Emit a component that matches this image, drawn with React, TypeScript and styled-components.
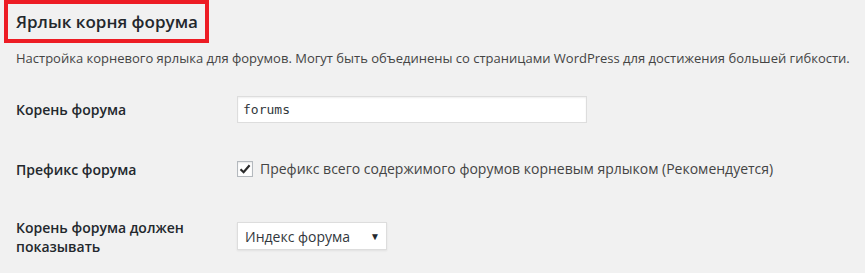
import styled, { createGlobalStyle } from "styled-components";

const GlobalStyle = createGlobalStyle`
  body {
    margin: 0;
    background: #f1f1f1;
    font-family: "Open Sans", "Noto Sans", sans-serif;
    color: #444;
  }
`;

const App = () => {
  return (
    <>
      <GlobalStyle />
      <Page>
        <Heading>Ярлык корня форума</Heading>
        <Description>
          Настройка корневого ярлыка для форумов. Могут быть объединены со
          страницами WordPress для достижения большей гибкости.
        </Description>
        <FormTable>
          <Row $height={60}>
            <Label>Корень форума</Label>
            <Field $top={16}>
              <TextInput>forums</TextInput>
            </Field>
          </Row>
          <Row $height={58}>
            <Label>Префикс форума</Label>
            <Field $top={20}>
              <CheckLine>
                <CheckBox>
                  <svg width="12" height="12" viewBox="0 0 12 12">
                    <path
                      d="M1.5 6.2 L4.6 9.2 L10.6 2.2"
                      fill="none"
                      stroke="#2b2b2b"
                      strokeWidth="2.2"
                    />
                  </svg>
                </CheckBox>
                Префикс всего содержимого форумов корневым ярлыком
                (Рекомендуется)
              </CheckLine>
            </Field>
          </Row>
          <Row $height={75}>
            <Label>Корень форума должен показывать</Label>
            <Field $top={24}>
              <Select>
                <span>Индекс форума</span>
                <Arrow>▼</Arrow>
              </Select>
            </Field>
          </Row>
        </FormTable>
      </Page>
    </>
  );
};

export default App;

const Page = styled.div`
  padding-left: 4px;
`;

const Heading = styled.h2`
  display: inline-block;
  margin: 0;
  padding: 6px 7px 6px 8px;
  border: 4px solid #ed1c24;
  font-size: 17px;
  line-height: 23px;
  font-weight: 600;
  color: #23282d;
`;

const Description = styled.p`
  margin: 5px 0 12px;
  padding-left: 12px;
  font-size: 13px;
  line-height: 20px;
  color: #444;
`;

const FormTable = styled.div`
  padding-left: 12px;
`;

const Row = styled.div<{ $height: number }>`
  display: grid;
  grid-template-columns: 221px 1fr;
  align-items: start;
  height: ${({ $height }) => $height}px;
`;

const Label = styled.div`
  padding-top: 20px;
  width: 180px;
  font-size: 14px;
  line-height: 19px;
  font-weight: 600;
  color: #23282d;
`;

const Field = styled.div<{ $top: number }>`
  padding-top: ${({ $top }) => $top}px;
`;

const TextInput = styled.div`
  box-sizing: border-box;
  width: 350px;
  height: 27px;
  padding: 0 5px;
  border: 1px solid #ddd;
  background: #fff;
  box-shadow: inset 0 1px 2px rgba(0, 0, 0, 0.07);
  font-family: "DejaVu Sans Mono", "Liberation Mono", monospace;
  font-size: 13px;
  line-height: 25px;
  color: #32373c;
`;

const CheckLine = styled.div`
  display: flex;
  align-items: center;
  gap: 7px;
  font-size: 14px;
  line-height: 18px;
  color: #444;
`;

const CheckBox = styled.span`
  box-sizing: border-box;
  flex: none;
  width: 16px;
  height: 16px;
  border: 1px solid #b4b9be;
  background: #fff;
  box-shadow: inset 0 1px 2px rgba(0, 0, 0, 0.1);
  display: flex;
  align-items: center;
  justify-content: center;
`;

const Select = styled.div`
  box-sizing: border-box;
  width: 150px;
  height: 28px;
  padding: 0 6px 0 7px;
  border: 1px solid #ddd;
  background: #fff;
  box-shadow: 0 1px 2px rgba(0, 0, 0, 0.07);
  display: flex;
  align-items: center;
  justify-content: space-between;
  font-size: 14px;
  color: #32373c;
`;

const Arrow = styled.span`
  font-size: 10px;
  color: #23282d;
`;
